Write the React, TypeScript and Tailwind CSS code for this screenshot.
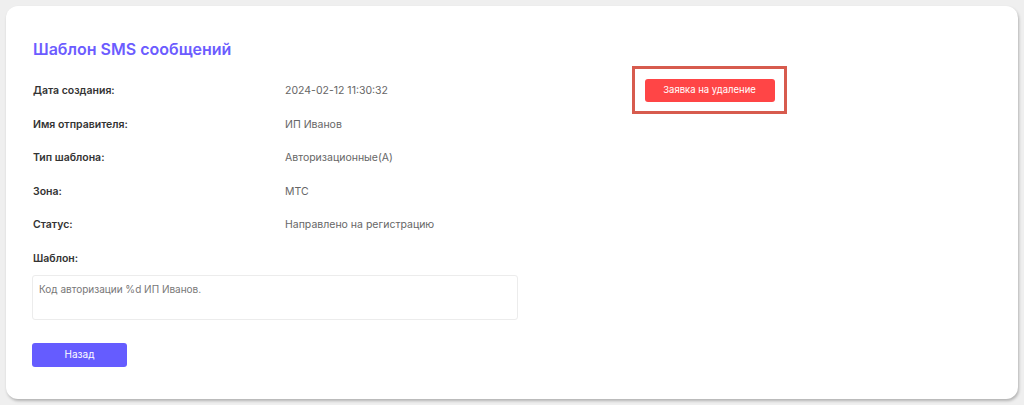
import React from 'react';

const rows: { label: string; value: string }[] = [
  { label: 'Дата создания:', value: '2024-02-12 11:30:32' },
  { label: 'Имя отправителя:', value: 'ИП Иванов' },
  { label: 'Тип шаблона:', value: 'Авторизационные(А)' },
  { label: 'Зона:', value: 'МТС' },
  { label: 'Статус:', value: 'Направлено на регистрацию' },
];

export default function App() {
  return (
    <main className="min-h-[405px] bg-[#efefef] px-[6px] pt-[6px] pb-[6px] font-['Inter',sans-serif]">
      <div className="flex h-[393px] rounded-[12px] bg-white pl-[27px] pt-[32px] shadow-[1px_2px_3px_rgba(0,0,0,0.25)]">
        <div className="w-[486px]">
          <h1 className="text-[16px] leading-[22px] font-semibold text-[#6c5cff]">Шаблон SMS сообщений</h1>

          <dl className="mt-[14px]">
            {rows.map((row) => (
              <div key={row.label} className="flex h-[33.6px] items-center">
                <dt className="w-[252px] text-[10.5px] font-semibold text-[#333]">{row.label}</dt>
                <dd className="text-[10.5px] text-[#666]">{row.value}</dd>
              </div>
            ))}
            <div className="flex h-[33.6px] items-center">
              <dt className="text-[10.5px] font-semibold text-[#333]">Шаблон:</dt>
            </div>
          </dl>

          <div className="mt-[-1px] ml-[-1px] h-[45px] w-[486px] rounded-[3px] border border-[#ececec] px-[6px] pt-[6px] text-[10px] text-[#777]">
            Код авторизации %d ИП Иванов.
          </div>

          <button className="mt-[23px] ml-[-1px] h-[24px] w-[95px] rounded-[3px] bg-[#655cff] text-[10px] text-white">
            Назад
          </button>
        </div>

        <div className="ml-[113px] pt-[28px]">
          <div className="flex h-[48px] w-[155px] items-center justify-center border-[3px] border-[#d75b4e]">
            <button className="h-[23px] w-[130px] rounded-[3px] bg-[#ff4546] text-[9.5px] text-white">
              Заявка на удаление
            </button>
          </div>
        </div>
      </div>
    </main>
  );
}
